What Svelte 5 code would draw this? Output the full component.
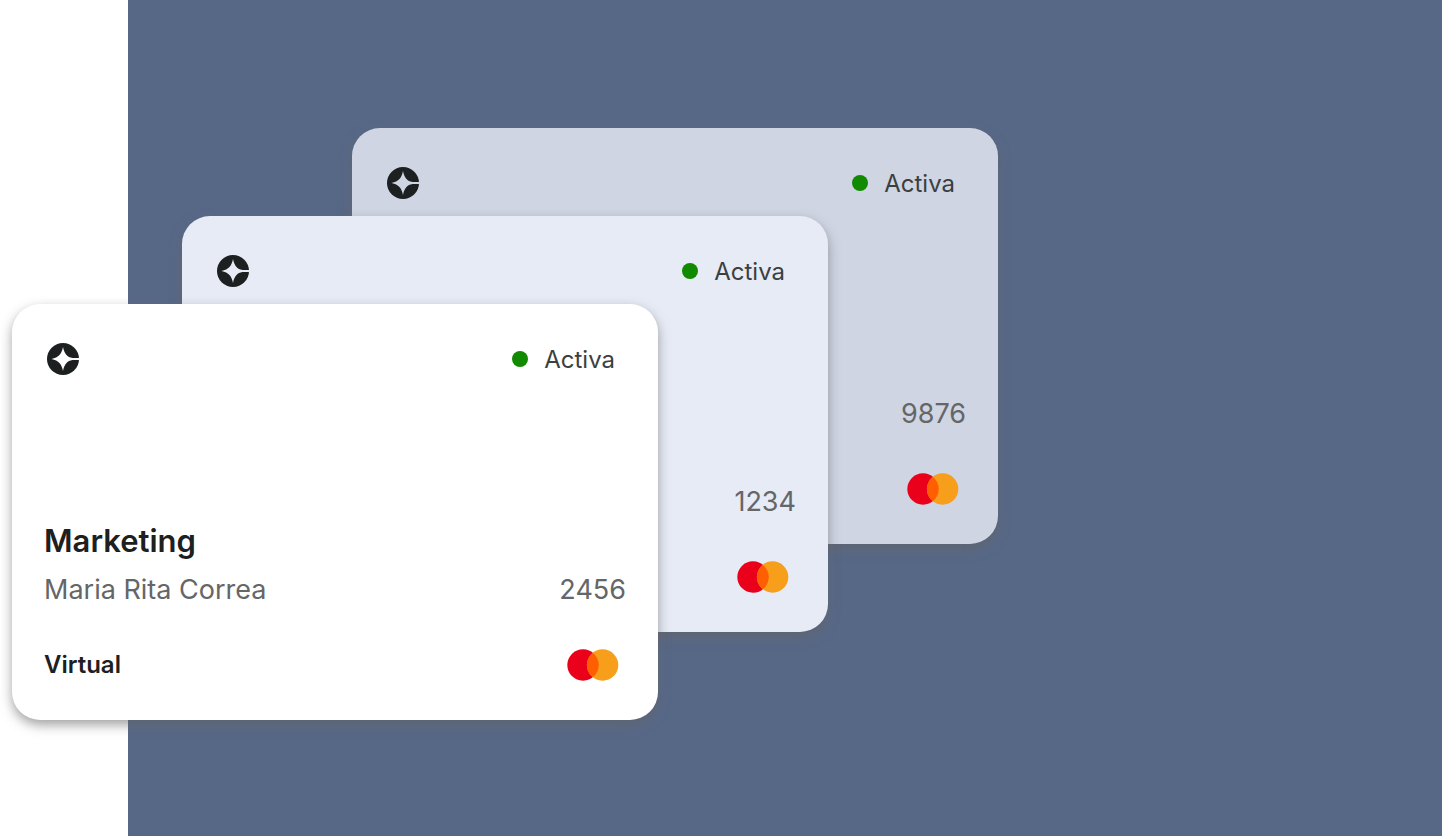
<script>
	// Back to front, each card overlaps the one before it
	const cards = [
		{ number: '9876', status: 'Activa', tone: 'back' },
		{ number: '1234', status: 'Activa', tone: 'middle' },
		{
			number: '2456',
			status: 'Activa',
			tone: 'front',
			title: 'Marketing',
			holder: 'Maria Rita Correa',
			type: 'Virtual'
		}
	];
</script>

<main>
	<section class="panel">
		<div class="stack">
			{#each cards as card}
				<article class="card {card.tone}">
					<header>
						<svg class="logo" viewBox="0 0 32 32" width="32" height="32" aria-hidden="true">
							<circle cx="16" cy="16" r="16" />
							<path
								class="star"
								d="M16 4C17.4 11 20.2 14.2 25.5 15H32V17H25.5C20.2 17.8 17.4 21 16 28C14.6 21 11.8 17.6 4.5 16C11.8 14.4 14.6 11 16 4Z"
							/>
						</svg>
						<p class="status"><span class="dot"></span>{card.status}</p>
					</header>

					<div class="details">
						{#if card.title}
							<h2>{card.title}</h2>
						{/if}
						<div class="row">
							{#if card.holder}
								<p>{card.holder}</p>
							{/if}
							<p class="number">{card.number}</p>
						</div>
						<footer>
							{#if card.type}
								<strong>{card.type}</strong>
							{/if}
							<svg class="brand" viewBox="0 0 52 32" width="52" height="32" role="img" aria-label="Mastercard">
								<circle cx="16" cy="16" r="15.7" fill="#eb001b" />
								<circle cx="35.6" cy="16" r="15.7" fill="#f79e1b" />
								<path d="M25.8 3.7A15.7 15.7 0 0 1 25.8 28.3A15.7 15.7 0 0 1 25.8 3.7Z" fill="#ff5f00" />
							</svg>
						</footer>
					</div>
				</article>
			{/each}
		</div>
	</section>
</main>

<style>
	:global(body) {
		margin: 0;
		background: #fff;
	}

	main {
		box-sizing: border-box;
		min-height: 100vh;
		display: flex;
		padding-left: 128px;
		font-family: Inter, 'Liberation Sans', sans-serif;
		color: #1d2021;
	}

	.panel {
		box-sizing: border-box;
		flex: 1;
		padding: 128px 0 116px;
		background: #576887;
	}

	/* Stepped grid, one step left and down for every card */
	.stack {
		display: grid;
		grid-template-columns: 170px 170px 306px 170px 170px;
		grid-template-rows: 88px 88px 240px 88px 88px;
		margin-left: -116px;
	}

	.card {
		box-sizing: border-box;
		display: flex;
		flex-direction: column;
		justify-content: space-between;
		padding: 36px 32px 39px;
		border-radius: 28px;
		box-shadow: 0 5px 12px rgba(100, 100, 100, 0.6);
	}

	.back {
		grid-area: 1 / 3 / 4 / 6;
		background: #cfd5e3;
	}

	.middle {
		grid-area: 2 / 2 / 5 / 5;
		background: #e6ebf6;
	}

	.front {
		grid-area: 3 / 1 / 6 / 4;
		background: #fff;
	}

	header,
	.row,
	footer {
		display: flex;
		align-items: center;
		justify-content: space-between;
	}

	header {
		align-items: flex-start;
	}

	.logo {
		margin: 3px 0 0 3px;
		fill: #1d2021;
	}

	.star {
		fill: #fff;
	}

	.middle .star {
		fill: #e6ebf6;
	}

	.back .star {
		fill: #cfd5e3;
	}

	h2,
	p {
		margin: 0;
		line-height: 40px;
	}

	.status {
		display: flex;
		align-items: center;
		gap: 16px;
		margin-right: 11px;
		font-size: 24px;
		color: #3b3f41;
	}

	.dot {
		width: 16px;
		height: 16px;
		margin-bottom: 2px;
		border-radius: 50%;
		background: #118a00;
	}

	h2 {
		margin-bottom: 9px;
		font-size: 31px;
		font-weight: 600;
	}

	.row {
		margin-bottom: 39px;
		font-size: 27px;
		color: #646668;
	}

	.number,
	.brand {
		margin-left: auto;
	}

	.brand {
		margin-right: 7px;
	}

	strong {
		font-size: 24px;
		font-weight: 600;
		line-height: 32px;
	}
</style>
